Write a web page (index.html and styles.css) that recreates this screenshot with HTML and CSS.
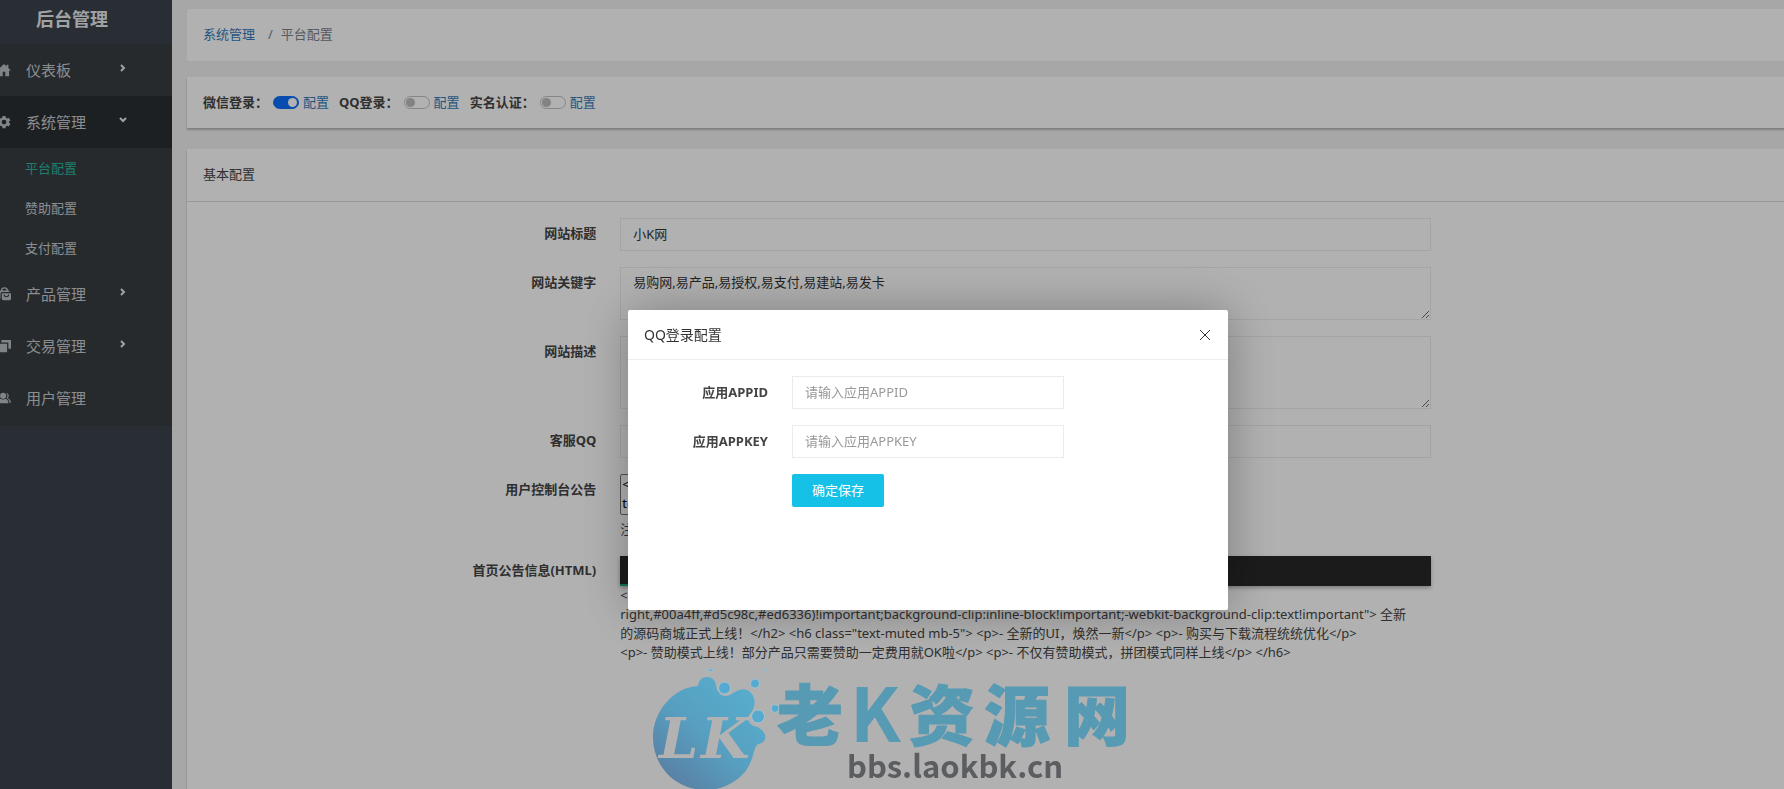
FILE: index.html
```html
<!DOCTYPE html>
<html lang="zh-CN">

<head>
    <meta charset="UTF-8">
    <meta name="viewport" content="width=device-width, initial-scale=1.0">
    <title>后台管理</title>
    <link rel="stylesheet" href="styles.css">
</head>

<body>
    <div class="page">
        <!-- 侧边菜单 -->
        <aside class="sidebar">
            <h1 class="logo">后台管理</h1>
            <nav class="nav">
                <a href="#" class="nav-item">
                    <svg class="nav-icon" viewBox="0 0 16 16"><path d="M8 1 0 8.500h2.200V15h4.300v-5h3v5h4.300V8.500H16L13 5.600V2h-2v1.800z"/></svg>
                    <span>仪表板</span>
                    <svg class="arrow" viewBox="0 0 8 8"><path d="M2 1l3 3-3 3"/></svg>
                </a>
                <a href="#" class="nav-item open">
                    <svg class="nav-icon" viewBox="0 0 16 16"><path fill-rule="evenodd" d="M6.300 1h3.400l.4 2 1.500.9 2-.7 1.700 3-1.600 1.300v1.200l1.600 1.300-1.700 3-2-.7-1.500.9-.4 2H6.300l-.4-2-1.500-.9-2 .7-1.700-3 1.600-1.300V7.500L.7 6.200l1.700-3 2 .7L5.900 3zM8 5.400a2.700 2.700 0 1 0 0 5.400 2.700 2.700 0 0 0 0-5.400z"/></svg>
                    <span>系统管理</span>
                    <svg class="arrow" viewBox="0 0 8 8"><path d="M1 2l3 3 3-3"/></svg>
                </a>
                <div class="sub-nav">
                    <a href="#" class="active">平台配置</a>
                    <a href="#">赞助配置</a>
                    <a href="#">支付配置</a>
                </div>
                <a href="#" class="nav-item">
                    <svg class="nav-icon" viewBox="0 0 16 16"><path fill-rule="evenodd" d="M1 4h3.500a4 3.600 0 0 1 8 0H14v1.600H5.200L4 7v6H1zM6 4h5a2.500 2.200 0 0 0-5 0zM5.500 7H16v6.500a1.500 1.500 0 0 1-1.500 1.500H7a1.500 1.500 0 0 1-1.500-1.500zM7.500 8.500a3.200 3.200 0 0 0 6.400 0h-1.200a2 2 0 0 1-4 0z"/></svg>
                    <span>产品管理</span>
                    <svg class="arrow" viewBox="0 0 8 8"><path d="M2 1l3 3-3 3"/></svg>
                </a>
                <a href="#" class="nav-item">
                    <svg class="nav-icon" viewBox="0 0 16 16"><path d="M5 1h11v10h-3V4H5zM0 5.500h11.500V15H0z"/></svg>
                    <span>交易管理</span>
                    <svg class="arrow" viewBox="0 0 8 8"><path d="M2 1l3 3-3 3"/></svg>
                </a>
                <a href="#" class="nav-item">
                    <svg class="nav-icon" viewBox="0 0 16 16"><circle cx="7" cy="5.500" r="3.500"/><path d="M0 14c0-3 2-4.800 4.500-5.200L7 10l2.500-1.200C12 9.200 13 11 13 14zM10.500 2a3.600 3.600 0 0 1 1.600 6.300C14.500 9.300 15.800 11 16 13.500h-1.700c-.2-2.600-1.200-4.200-3.300-5.300 1.300-2 1.300-4-.5-6.200z"/></svg>
                    <span>用户管理</span>
                </a>
            </nav>
        </aside>

        <main class="main">
            <!-- 面包屑 -->
            <div class="breadcrumb">
                <a href="#">系统管理</a>
                <span class="slash">/</span>
                <span>平台配置</span>
            </div>

            <!-- 登录开关 -->
            <div class="card switches">
                <div class="switch-item">
                    <label for="wx">微信登录：</label>
                    <input type="checkbox" id="wx" class="switch" checked>
                    <a href="#">配置</a>
                </div>
                <div class="switch-item">
                    <label for="qq">QQ登录：</label>
                    <input type="checkbox" id="qq" class="switch">
                    <a href="#">配置</a>
                </div>
                <div class="switch-item">
                    <label for="real">实名认证：</label>
                    <input type="checkbox" id="real" class="switch">
                    <a href="#">配置</a>
                </div>
            </div>

            <!-- 基本配置 -->
            <div class="card config">
                <h2 class="card-title">基本配置</h2>
                <form class="form">
                    <div class="row">
                        <label for="title">网站标题</label>
                        <div><input type="text" id="title" class="control" value="小K网"></div>
                    </div>
                    <div class="row">
                        <label for="keywords">网站关键字</label>
                        <div><textarea id="keywords" class="control h-53">易购网,易产品,易授权,易支付,易建站,易发卡</textarea></div>
                    </div>
                    <div class="row">
                        <label for="desc">网站描述</label>
                        <div><textarea id="desc" class="control h-73"></textarea></div>
                    </div>
                    <div class="row">
                        <label for="service">客服QQ</label>
                        <div><input type="text" id="service" class="control"></div>
                    </div>
                    <div class="row">
                        <label for="notice">用户控制台公告</label>
                        <div>
                            <textarea id="notice" class="notice">&lt;p class="mb-0
text-muted"&gt;</textarea>
                            <p class="tip">注：支持HTML</p>
                        </div>
                    </div>
                    <div class="row">
                        <label>首页公告信息(HTML)</label>
                        <div>
                            <div class="toolbar"><span class="tab"></span></div>
                            <div class="code">&lt;h2 style="background:linear-gradient(to
right,#00a4ff,#d5c98c,#ed6336)!important;background-clip:inline-block!important;-webkit-background-clip:text!important"&gt; 全新
的源码商城正式上线！&lt;/h2&gt; &lt;h6 class="text-muted mb-5"&gt; &lt;p&gt;- 全新的UI，焕然一新&lt;/p&gt; &lt;p&gt;- 购买与下载流程统统优化&lt;/p&gt;
&lt;p&gt;- 赞助模式上线！部分产品只需要赞助一定费用就OK啦&lt;/p&gt; &lt;p&gt;- 不仅有赞助模式，拼团模式同样上线&lt;/p&gt; &lt;/h6&gt;</div>
                        </div>
                    </div>
                </form>
            </div>
        </main>
    </div>

    <div class="shade">
        <div class="modal" role="dialog" aria-labelledby="modal-title">
            <div class="modal-head">
                <h3 id="modal-title">QQ登录配置</h3>
                <button type="button" class="close" aria-label="关闭">
                    <svg viewBox="0 0 12 12"><path d="M1 1l10 10M11 1L1 11"/></svg>
                </button>
            </div>
            <form class="modal-form">
                <label for="appid">应用APPID</label>
                <input type="text" id="appid" class="control" placeholder="请输入应用APPID">
                <label for="appkey">应用APPKEY</label>
                <input type="text" id="appkey" class="control" placeholder="请输入应用APPKEY">
                <button type="submit" class="btn">确定保存</button>
            </form>
        </div>
    </div>

    <!-- 水印 -->
    <svg class="watermark" viewBox="0 0 492 120">
        <defs>
            <linearGradient id="blue" x1="0.800" y1="0.100" x2="0.100" y2="0.900">
                <stop offset="0" stop-color="#57accd"/>
                <stop offset="0.500" stop-color="#579fc0"/>
                <stop offset="1" stop-color="#597fa3"/>
            </linearGradient>
        </defs>
        <path fill="url(#blue)" d="M13 68C13 42 34 18 58 17C59 11 62 8 67 8C72 8 75 11 76 16C77 25 83 29 90 26C97 22 102 18 109 22C117 28 116 39 109 46C107 51 110 56 114 57C127 60 129 73 119 75C113 76 115 90 105 103C95 114 82 121 66 121C36 121 13 98 13 68Z"/>
        <g fill="#57aacf" stroke="#a5c3d0" stroke-width="1">
            <circle cx="84.500" cy="19" r="6"/>
            <circle cx="115" cy="14.500" r="4.500"/>
            <circle cx="118" cy="47.500" r="6.500"/>
            <circle cx="135" cy="39.500" r="4"/>
            <path d="M66 0h9c-2 3-7 3-9 0zM122 0h6c-2 2-4 2-6 0z"/>
        </g>
        <text class="lk" x="19" y="89">L</text>
        <text class="lk" x="61" y="89">K</text>
        <g class="brush">
            <text x="137" y="71">老</text>
            <text x="269" y="71">资</text>
            <text x="344" y="71">源</text>
            <text x="424" y="71">网</text>
        </g>
        <text class="big-k" x="210" y="73">K</text>
        <text class="site" x="207" y="109">bbs.laokbk.cn</text>
    </svg>
</body>

</html>
```
FILE: styles.css
```css
/* General */
* {
    box-sizing: border-box;
}

body {
    margin: 0;
    overflow: hidden;
    font-family: 'Noto Sans', 'Noto Sans CJK SC', sans-serif;
    font-size: 13px;
    line-height: 20px;
    color: #444;
    background: #f0f0f0;
}

h1,
h2,
h3,
p {
    margin: 0;
}

a {
    color: #337ab7;
    text-decoration: none;
}

input,
textarea,
button {
    font-family: inherit;
    font-size: 13px;
    line-height: 20px;
}

.page {
    display: flex;
    width: calc(100% + 76px);
    min-height: 100vh;
}

/* Menu */
.sidebar {
    flex: none;
    width: 172px;
    overflow: hidden;
    background: #3b414b;
}

.logo {
    height: 44px;
    padding-left: 36px;
    font-size: 18px;
    line-height: 38px;
    color: #e6e8ea;
}

.nav {
    padding-bottom: 2px;
    background: #373d41;
}

.nav-item {
    display: flex;
    align-items: center;
    height: 52px;
    font-size: 15px;
    color: #c8cbcf;
}

.nav-item span {
    width: 93px;
}

.nav-item.open {
    background: #2a2e33;
}

.nav-icon {
    flex: none;
    width: 14px;
    height: 14px;
    margin-left: -3px;
    margin-right: 15px;
    fill: #b9bdc2;
}

.arrow {
    width: 8px;
    height: 8px;
    margin-bottom: 4px;
    fill: none;
    stroke: #e6e8ea;
    stroke-width: 2;
}

.sub-nav a {
    display: block;
    padding-left: 25px;
    line-height: 40px;
    color: #c8cbcf;
}

.sub-nav a.active {
    color: #2cb5a0;
}

/* Content */
.main {
    flex: 1;
    display: flex;
    flex-direction: column;
    padding: 9px 0 0 15px;
}

.breadcrumb {
    display: flex;
    align-items: center;
    height: 52px;
    padding: 0 16px 2px;
    margin-bottom: 16px;
    border-radius: 2px;
    color: #7c8188;
    background: #fefefe;
}

.slash {
    margin: 0 8px 0 13px;
}

.card {
    background: #fefefe;
    box-shadow: 0 2px 2px rgba(0, 0, 0, 0.25);
}

.switches {
    display: flex;
    align-items: center;
    gap: 10px;
    height: 51px;
    padding: 0 16px 2px;
    margin-bottom: 21px;
}

.switch-item {
    display: flex;
    align-items: center;
}

.switch-item label,
.row > label,
.modal-form label {
    font-weight: bold;
}

.switch {
    appearance: none;
    display: flex;
    align-items: center;
    width: 26px;
    height: 13px;
    margin: 2px 4px 0 5px;
    padding: 0 1px;
    border: 1px solid #c0c0c0;
    border-radius: 7px;
}

.switch::before {
    content: '';
    width: 9px;
    height: 9px;
    border-radius: 50%;
    background: #bcbcbc;
}

.switch:checked {
    justify-content: flex-end;
    border-color: #0d6efd;
    background: #0d6efd;
}

.switch:checked::before {
    background: #fff;
}

.config {
    flex: 1;
}

.card-title {
    padding: 15px 16px 17px;
    border-bottom: 1px solid #dcdcdc;
    font-size: 13px;
    font-weight: normal;
    line-height: 20px;
}

.form {
    padding: 16px 0 0 4px;
}

.row {
    display: grid;
    grid-template-columns: 25% 50%;
    margin-bottom: 16px;
}

.row > label {
    padding: 5px 12px;
    text-align: right;
}

.row > div {
    padding: 0 12px;
}

.control {
    display: block;
    width: 100%;
    height: 33px;
    padding: 4px 12px 6px;
    border: 1px solid #ebebeb;
    color: #333;
    background: transparent;
    outline: none;
}

.control::placeholder {
    color: #999;
}

.h-53 {
    height: 53px;
}

.h-73 {
    height: 73px;
}

.notice {
    display: block;
    width: 180px;
    height: 41px;
    padding: 0 1px;
    border: 1px solid #767676;
    border-radius: 2px;
    line-height: 19px;
    background: transparent;
}

.tip {
    margin-top: 4px;
}

.toolbar {
    display: flex;
    align-items: flex-end;
    height: 30px;
    background: #282828;
    box-shadow: 0 2px 4px rgba(0, 0, 0, 0.3);
}

.row .toolbar {
    margin-top: 1px;
}

.tab {
    width: 80px;
    height: 2px;
    background: #16a777;
}

.code {
    line-height: 19px;
    white-space: pre;
}

/* Dialog */
.shade {
    position: fixed;
    top: 0;
    left: 0;
    width: calc(100% + 72px);
    height: 100%;
    background: rgba(0, 0, 0, 0.3);
}

.modal {
    width: 600px;
    height: 300px;
    margin: 310px auto 0;
    border-radius: 2px;
    background: #fff;
    box-shadow: 1px 1px 50px rgba(0, 0, 0, 0.3);
}

.modal-head {
    display: flex;
    align-items: center;
    justify-content: space-between;
    height: 50px;
    padding: 0 16px;
    border-bottom: 1px solid #eee;
}

.modal-head h3 {
    font-size: 14px;
    font-weight: normal;
    color: #333;
}

.close {
    display: flex;
    padding: 1px;
    border: none;
    background: none;
    cursor: pointer;
}

.close svg {
    width: 12px;
    height: 12px;
    stroke: #333;
}

.modal-form {
    display: grid;
    grid-template-columns: 140px 272px;
    gap: 16px 24px;
    align-items: center;
    padding: 16px 0;
}

.modal-form label {
    padding-bottom: 2px;
    text-align: right;
}

.btn {
    grid-column: 2;
    justify-self: start;
    height: 33px;
    padding: 0 20px 2px;
    border: none;
    border-radius: 2px;
    color: #fff;
    background: #15c1e6;
    cursor: pointer;
}

/* Watermark */
.watermark {
    position: fixed;
    left: 640px;
    bottom: 0;
    width: 492px;
    height: 120px;
    font-family: 'Noto Sans CJK SC', sans-serif;
    font-weight: bold;
}

.lk {
    font-family: 'DejaVu Serif', serif;
    font-size: 56px;
    font-style: italic;
    fill: #b2b2b2;
}

.brush {
    font-size: 66px;
    font-weight: 900;
    fill: #579ab3;
    stroke: #579ab3;
    stroke-width: 1;
    stroke-linejoin: round;
}

.big-k {
    font-size: 74px;
    fill: #579ab3;
}

.site {
    font-size: 31px;
    fill: #5b5d60;
}
```
